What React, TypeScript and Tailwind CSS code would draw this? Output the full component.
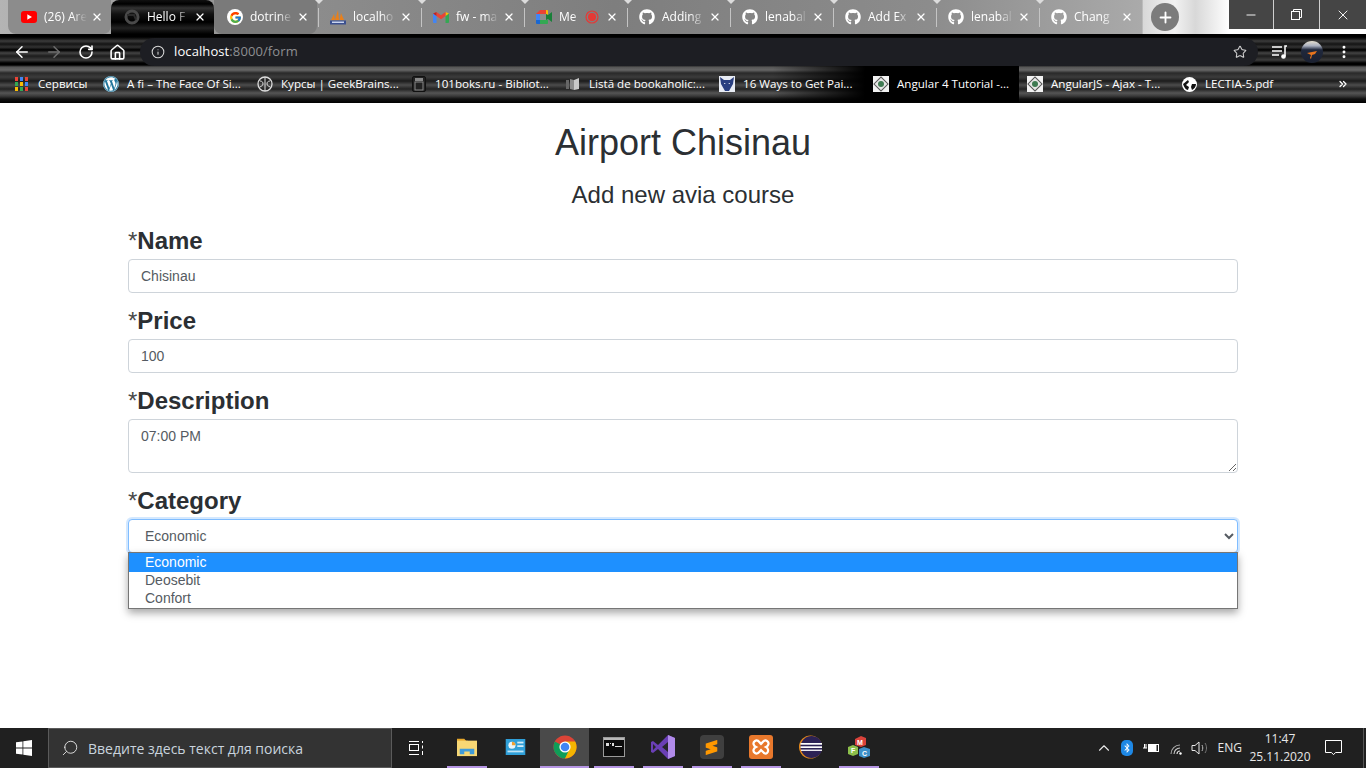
import React from "react";
import { ArrowLeft, ArrowRight, RotateCw, Home, Info, Star, MoreVertical, ChevronsRight, X, Plus, Minus, ChevronUp, Search } from "lucide-react";
import { FaGithub, FaWordpress, FaBluetoothB } from "react-icons/fa";
import { FcGoogle } from "react-icons/fc";
import { SiSublimetext } from "react-icons/si";

const Youtube = () => (
  <svg width="16" height="12" viewBox="0 0 16 12"><rect width="16" height="12" rx="3" fill="#f00" /><path d="M6.3 3.2 11 6 6.3 8.8z" fill="#fff" /></svg>
);
const LoadingDot = () => (
  <svg width="16" height="16" viewBox="0 0 16 16"><circle cx="8" cy="8" r="6" fill="none" stroke="#4a4a4a" strokeWidth="3" /><path d="M3 6h7l2 5" stroke="#2c2c2c" fill="none" strokeWidth="2" /></svg>
);
const GoogleIcon = () => (
  <span className="flex h-4 w-4 items-center justify-center rounded-full bg-white"><FcGoogle size={13} /></span>
);
const Pma = () => (
  <svg width="16" height="16" viewBox="0 0 16 16"><path d="M1 11 4 5l1 6zM5 11l3-10 1 10zM9.500 11 11 4l3 7z" fill="#e8801c" /><rect x="0" y="11.500" width="16" height="4" fill="#3a4f8f" /><rect x="2" y="12.500" width="12" height="1.500" fill="#c9d4ee" /></svg>
);
const Gmail = () => (
  <svg width="16" height="12" viewBox="0 0 16 12"><path d="M0 2v9a1 1 0 0 0 1 1h2.500V5z" fill="#4285f4" /><path d="M16 2v9a1 1 0 0 1-1 1h-2.500V5z" fill="#34a853" /><path d="M12.500 1 16 2.500 12.500 5z" fill="#fbbc04" /><path d="M3.500 5 8 8.300 12.500 5V1L8 4.300 3.500 1z" fill="#ea4335" /><path d="M0 2.500 3.500 1v4z" fill="#c5221f" /></svg>
);
const Meet = () => (
  <svg width="16" height="14" viewBox="0 0 16 14"><path d="M4 0h6v4H0z" fill="#ea4335" /><path d="M0 4h4v6H0z" fill="#4285f4" /><path d="M0 10h4v4H1a1 1 0 0 1-1-1z" fill="#1967d2" /><path d="M10 0h1a1 1 0 0 1 1 1v4l-2-1z" fill="#fbbc04" /><path d="M4 10h8v3a1 1 0 0 1-1 1H4z" fill="#34a853" /><path d="M10 4l2 1 4-3v10l-4-3-2 1z" fill="#188038" /><rect x="4" y="4" width="6" height="6" fill="#8d8d8d" /></svg>
);
const Record = () => (
  <svg width="14" height="14" viewBox="0 0 14 14"><circle cx="7" cy="7" r="6" fill="none" stroke="#e53935" strokeWidth="1.200" /><circle cx="7" cy="7" r="4" fill="#e53935" /></svg>
);
const Github = () => <FaGithub size={16} color="#fff" />;

const tabs: { icon: React.ReactNode; text: string; cls?: string; rec?: boolean }[] = [
  { icon: <Youtube />, text: "(26) Are", cls: "bg-[#8c8c8c] rounded-b-lg" },
  { icon: <LoadingDot />, text: "Hello F", cls: "active" },
  { icon: <GoogleIcon />, text: "dotrine", cls: "bg-[#7a7a7a] rounded-b-lg" },
  { icon: <Pma />, text: "localho", cls: "" },
  { icon: <Gmail />, text: "fw - ma", cls: "" },
  { icon: <Meet />, text: "Me", cls: "", rec: true },
  { icon: <Github />, text: "Adding", cls: "" },
  { icon: <Github />, text: "lenabal", cls: "" },
  { icon: <Github />, text: "Add Ex", cls: "" },
  { icon: <Github />, text: "lenabal", cls: "" },
  { icon: <Github />, text: "Chang", cls: "" },
];

const AppsIcon = () => (
  <svg width="13" height="14" viewBox="0 0 13 14">
    {[
      [0, 0, "#ea4335"], [5, 0, "#4285f4"], [10, 0, "#ea4335"],
      [0, 5, "#34a853"], [5, 5, "#fbbc04"], [10, 5, "#4285f4"],
      [0, 10, "#fbbc04"], [5, 10, "#34a853"], [10, 10, "#ea4335"],
    ].map(([x, y, c], i) => <rect key={i} x={x as number} y={y as number} width="3" height="4" fill={c as string} />)}
  </svg>
);
const Brain = () => (
  <svg width="16" height="16" viewBox="0 0 16 16"><circle cx="8" cy="8" r="7" fill="none" stroke="#ddd" strokeWidth="1.300" /><path d="M8 1v14M3 5c2 0 3 1 3 3s-2 2-3 3M13 5c-2 0-3 1-3 3s2 2 3 3" fill="none" stroke="#ddd" /></svg>
);
const BookDoc = () => (
  <svg width="14" height="16" viewBox="0 0 14 16"><rect x="0.500" y="0.500" width="13" height="15" rx="1.500" fill="#222" stroke="#111" /><rect x="3" y="2" width="8" height="3" fill="#888" /><rect x="3" y="6" width="8" height="8" fill="none" stroke="#888" /></svg>
);
const GreyBook = () => (
  <svg width="14" height="14" viewBox="0 0 14 14"><path d="M0 3h3v9H0z" fill="#666" /><path d="M4 2l4 1v10l-4-1z" fill="#8d8d8d" /><path d="M8 3l5-2v11l-5 1z" fill="#c9c9c9" /></svg>
);
const Wolf = () => (
  <svg width="16" height="16" viewBox="0 0 16 16"><rect width="16" height="16" fill="#e8ecf4" /><path d="M1 1l4 3h6l4-3-1 7-4 7H6L2 8z" fill="#2a3f80" /><path d="M5 7l2 1H5zM11 7 9 8h2z" fill="#fff" /></svg>
);
const Diamond = () => (
  <svg width="16" height="16" viewBox="0 0 16 16"><rect width="16" height="16" fill="#f2f2f2" /><rect x="3" y="3" width="10" height="10" transform="rotate(45 8 8)" fill="#e6e6e6" stroke="#555" /><circle cx="8" cy="8" r="3" fill="#3f7a52" /></svg>
);
const GlobeIcon = () => (
  <svg width="15" height="15" viewBox="0 0 15 15"><circle cx="7.500" cy="7.500" r="7.500" fill="#fff" /><path d="M1 7c2-1 3-3 5-4l1 2-3 3 3 2-1 3C4 13 2 10 1 7zM10 7h4c0 3-2 5-4 6l-1-3z" fill="#111" /></svg>
);

const bookmarks: { icon: React.ReactNode; text: string; cls?: string }[] = [
  { icon: <span className="flex h-4 w-4 items-center justify-center rounded-full bg-[#21759b] text-white"><FaWordpress size={16} color="#fff" /></span>, text: "A fi – The Face Of Si..." },
  { icon: <Brain />, text: "Курсы | GeekBrains..." },
  { icon: <BookDoc />, text: "101boks.ru - Bibliot..." },
  { icon: <GreyBook />, text: "Listă de bookaholic:..." },
  { icon: <Wolf />, text: "16 Ways to Get Pai...", cls: "bg-[linear-gradient(90deg,transparent_40%,#000_100%)]" },
  { icon: <Diamond />, text: "Angular 4 Tutorial -...", cls: "bg-black" },
  { icon: <Diamond />, text: "AngularJS - Ajax - T..." },
  { icon: <GlobeIcon />, text: "LECTIA-5.pdf" },
];

const Explorer = () => (
  <svg width="22" height="20" viewBox="0 0 24 22"><path d="M1 2h8l2 2h2v3H1z" fill="#e8a92c" /><rect x="1" y="4" width="22" height="17" fill="#f7d774" /><path d="M4 19v-6h16v6h-5v-3H9v3z" fill="#3f9bd9" /></svg>
);
const Control = () => (
  <svg width="21" height="16" viewBox="0 0 22 18"><rect width="22" height="18" fill="#2f9fd8" /><circle cx="7" cy="7" r="4" fill="#e8f5fb" /><path d="M7 7V3a4 4 0 0 1 4 4z" fill="#f0a030" /><rect x="13" y="3" width="7" height="2" fill="#d6eef9" /><rect x="13" y="7" width="7" height="2" fill="#d6eef9" /><rect x="2" y="13" width="18" height="2" fill="#bfe3f5" /></svg>
);
const Chrome = () => (
  <svg width="24" height="24" viewBox="0 0 24 24">
    <circle cx="12" cy="12" r="11.500" fill="#db4437" />
    <path d="M12 12 1.900 6.500A11.500 11.500 0 0 0 12 23.500l5.500-10z" fill="#0f9d58" />
    <path d="M12 6.500h10.200A11.500 11.500 0 0 1 12 23.500L17 13z" fill="#f4b400" />
    <circle cx="12" cy="12" r="5.600" fill="#fff" /><circle cx="12" cy="12" r="4.300" fill="#4285f4" />
  </svg>
);
const Cmd = () => (
  <svg width="22" height="20" viewBox="0 0 22 20"><rect x="0.500" y="0.500" width="21" height="19" fill="#0c0c0c" stroke="#9a9a9a" /><rect x="1" y="1" width="20" height="2" fill="#b8b8b8" /><path d="M3 6h3v3H3zM7 6h1v1H7zM9 6h2v3H9zM12 9h7v1h-7z" fill="#ddd" /></svg>
);
const VS = () => (
  <svg width="24" height="24" viewBox="0 0 24 24"><path d="M17 0l7 3v18l-7 3-10-10-5 4-2-1V7l2-1 5 4z" fill="#6a3fb5" /><path d="M17 0l7 3v18l-7 3z" fill="#b18bea" /><path d="M2 9v6l3-3zM17 7l-6 5 6 5z" fill="#26262a" /></svg>
);
const Sublime = () => (
  <span className="flex h-6 w-6 items-center justify-center rounded-sm bg-[#3f3f3f]"><SiSublimetext size={15} color="#ff9800" /></span>
);
const Xampp = () => (
  <svg width="24" height="24" viewBox="0 0 24 24"><rect width="24" height="24" rx="3" fill="#e8782c" /><path d="M6 6c3-2 4 1 6 3 2-2 3-5 6-3s1 5-1 6c2 1 3 4 1 6s-4-1-6-3c-2 2-3 5-6 3s-1-5 1-6C5 11 3 8 6 6z" fill="none" stroke="#fff" strokeWidth="2.200" /></svg>
);
const Eclipse = () => (
  <svg width="24" height="24" viewBox="0 0 24 24"><circle cx="12.500" cy="12" r="11.500" fill="#e88a1a" /><circle cx="13.500" cy="12" r="11" fill="#2c2255" /><rect x="2.500" y="8" width="22" height="1.700" fill="#fff" /><rect x="2.500" y="11.300" width="22" height="1.700" fill="#fff" /><rect x="3" y="14.600" width="21" height="1.300" fill="#fff" /></svg>
);
const Mgmt = () => (
  <svg width="24" height="24" viewBox="0 0 24 24">
    <path d="M8 4l6-3 5 2v7l-5 2-6-2z" fill="#d9433b" /><path d="M1 12l5-2 5 2v7l-5 2-5-2z" fill="#8cbf4b" /><path d="M12 14l5-2 6 2v7l-6 2-5-2z" fill="#3d8fc9" />
    <text x="10" y="10" fontSize="7" fontWeight="700" fill="#fff" fontFamily="Liberation Sans">M</text>
    <text x="4" y="18" fontSize="7" fontWeight="700" fill="#fff" fontFamily="Liberation Sans">F</text>
    <text x="15" y="21" fontSize="7" fontWeight="700" fill="#fff" fontFamily="Liberation Sans">C</text>
  </svg>
);

const taskIcons: { icon: React.ReactNode; line: boolean; active?: boolean }[] = [
  { icon: <Explorer />, line: true },
  { icon: <Control />, line: false },
  { icon: <Chrome />, line: true, active: true },
  { icon: <Cmd />, line: true },
  { icon: <VS />, line: true },
  { icon: <Sublime />, line: true },
  { icon: <Xampp />, line: true },
  { icon: <Eclipse />, line: false },
  { icon: <Mgmt />, line: true },
];

const fieldCls = "block w-full rounded-[4px] border border-[#ced4da] bg-white px-3 text-[14px] text-[#555b62] outline-none";
const labelCls = "mb-[4px] block h-[28px] text-[24px] leading-[28px] text-[#4a4a4a]";
const Req = ({ children }: { children: string }) => <>*<b className="font-bold text-[#2b2f33]">{children}</b></>;

export default function App() {
  return (
    <div className="flex h-[768px] w-[1366px] flex-col overflow-hidden bg-white [font-family:'Liberation_Sans',Arial,sans-serif]">
      <header className="flex h-[103px] shrink-0 flex-col [font-family:'Open_Sans','Noto_Sans',sans-serif]">
        <div className="flex h-[34px] shrink-0 bg-[linear-gradient(90deg,#b4b4b4_0,#8e8e8e_20%,#7e7e7e_45%,#8c8c8c_68%,#aaa_83.6%,#d8d8d8_83.7%,#f2f2f2_86%,#d8d8d8_87.5%,#fff_90%,#fff_100%)]">
          <div className="flex items-stretch pl-2">
            {tabs.map((t, i) => (
              <div key={i} className={`relative flex w-[103px] shrink-0 items-center pl-[13px] pr-[8px] ${t.cls === "active" ? "bg-[linear-gradient(180deg,#111_0,#000_4px,#333_8px,#111_14px,#000_22px,#222_28px,#000_34px)] rounded-t-lg" : t.cls}`}>
                <span className="flex w-[16px] shrink-0 items-center justify-center">{t.icon}</span>
                <span className={`ml-[7px] whitespace-nowrap text-[12px] text-white [mask-image:linear-gradient(to_right,black_65%,transparent)] ${t.rec ? "w-[22px]" : "w-[43px]"}`}>{t.text}</span>
                {t.rec && <span className="mx-[4px] flex items-center"><Record /></span>}
                <X size={12} strokeWidth={2.5} className="ml-auto text-white" />
                {i >= 2 && i < 10 && <span className="absolute -right-[2px] top-[8px] h-[19px] w-px bg-[#c4c4c4]" />}
                {i >= 2 && i < 10 && <span className="absolute -right-[6px] top-0 h-0 w-0 border-x-[4px] border-t-[4px] border-x-transparent border-t-[#dcdcdc]" />}
              </div>
            ))}
          </div>
          <div className="ml-[8px] mt-[3px] flex h-[28px] w-[28px] translate-x-[2px] items-center justify-center rounded-full bg-[#7b7b7b] text-white">
            <Plus size={17} strokeWidth={2.6} />
          </div>
          <div className="ml-auto flex h-[29px] w-[137px] bg-[#454545] text-white">
            <div className="flex w-[45px] items-center justify-center border-r border-[#cfcfcf]"><Minus size={14} strokeWidth={1.6} /></div>
            <div className="flex w-[46px] items-center justify-center border-r border-[#cfcfcf]"><svg width="11" height="11" viewBox="0 0 11 11" fill="none" stroke="#fff"><rect x="0.500" y="2.500" width="8" height="8" /><path d="M2.500 2.500v-2h8v8h-2" /></svg></div>
            <div className="flex flex-1 items-center justify-center"><X size={16} strokeWidth={1.4} /></div>
          </div>
        </div>

        <div className="flex flex-1 flex-col bg-[linear-gradient(180deg,#000_0,#000_3px,#1a1a1a_5px,#3c3c3c_7px,#141414_10px,#333_13px,#000_16px,#444_19px,#1c1c1c_22px,#3c3c3c_26px,#000_29px,#000_31px,#555_33px,#666_36px,#2a2a2a_39px,#3c3c3c_43px,#1c1c1c_47px,#4c4c4c_51px,#222_55px,#555_59px,#3a3a3a_62px,#111_65px,#000_69px)]">
          <div className="flex h-[32px] shrink-0 items-center pt-[4px]">
            <div className="flex w-[140px] shrink-0 items-center pl-[13px] text-white">
              <ArrowLeft size={18} strokeWidth={2} />
              <ArrowRight size={18} strokeWidth={2} className="ml-[14px] text-[#6e6e6e]" />
              <RotateCw size={16} strokeWidth={2.4} className="ml-[15px]" />
              <Home size={17} strokeWidth={2.2} className="ml-[15px]" />
            </div>
            <div className="flex h-[28px] w-[1118px] shrink-0 items-center rounded-full bg-[#1d1e23] pl-[11px] pr-[11px]">
              <Info size={14} strokeWidth={1.8} className="text-[#d8d8d8]" />
              <span className="ml-[9px] text-[13px] tracking-[0.1px] text-white">localhost<span className="text-[#8e8f92]">:8000/form</span></span>
              <Star size={14} strokeWidth={1.8} className="ml-auto text-[#cfcfcf]" />
            </div>
            <div className="flex flex-1 items-center pl-[14px] text-white">
              <svg width="16" height="14" viewBox="0 0 16 14" fill="none" stroke="#fff" strokeWidth="1.500"><path d="M0 2h10M0 6h10M0 10h7" /><path d="M15 1h-2v10" /><circle cx="11.500" cy="11.500" r="1.600" fill="#fff" /></svg>
              <span className="ml-[13px] h-[22px] w-[22px] overflow-hidden rounded-full bg-[linear-gradient(180deg,#e6e0d0_0,#aab0c0_22%,#20283c_40%,#1a2030_100%)]">
                <svg width="22" height="22" viewBox="0 0 22 22"><path d="M6 12l5-1 5-1-2 3-3 1-1 4-1-1 1-3z" fill="#e8741c" /></svg>
              </span>
              <MoreVertical size={16} strokeWidth={2.4} className="ml-[13px]" />
            </div>
          </div>

          <div className="flex h-[36px] shrink-0 items-center text-[11.6px] text-white">
            <div className="flex w-[95px] shrink-0 items-center pl-[15px]">
              <AppsIcon />
              <span className="ml-[10px]">Сервисы</span>
            </div>
            {bookmarks.map((b, i) => (
              <div key={i} className={`flex h-full w-[154px] shrink-0 items-center pl-[8px] ${b.cls ?? ""}`}>
                <span className="flex w-[16px] shrink-0 items-center justify-center">{b.icon}</span>
                <span className="ml-[8px] whitespace-nowrap">{b.text}</span>
              </div>
            ))}
            <ChevronsRight size={12} strokeWidth={2.5} className="ml-auto mr-[17px]" />
          </div>
        </div>
      </header>

      <main className="relative flex-1 px-[128px] pt-[17px]">
        <h1 className="h-[46px] text-center text-[36px] leading-[46px] text-[#2b2f33]">Airport Chisinau</h1>
        <h3 className="mt-[15px] h-[28px] text-center text-[24px] leading-[28px] text-[#2b2f33]">Add new avia course</h3>
        <form className="mt-[18px]">
          <div className="mb-[14px]">
            <label className={labelCls}><Req>Name</Req></label>
            <input readOnly value="Chisinau" className={`${fieldCls} h-[34px]`} />
          </div>
          <div className="mb-[14px]">
            <label className={labelCls}><Req>Price</Req></label>
            <input readOnly value="100" className={`${fieldCls} h-[34px]`} />
          </div>
          <div className="mb-[14px]">
            <label className={labelCls}><Req>Description</Req></label>
            <textarea readOnly value="07:00 PM" className={`${fieldCls} h-[54px] py-[6px] leading-[20px]`} />
          </div>
          <div className="relative">
            <label className={labelCls}><Req>Category</Req></label>
            <select defaultValue="Economic" className="block h-[34px] w-full rounded-[4px] border border-[#80bdff] bg-white px-3 text-[14px] text-[#555b62] shadow-[0_0_0_2px_rgba(128,189,255,0.35)] outline-none">
              <option>Economic</option>
              <option>Deosebit</option>
              <option>Confort</option>
            </select>
            <ul className="absolute left-0 top-[65px] w-full border border-[#767676] bg-white text-[14px] text-[#555b62] shadow-[0_4px_8px_rgba(0,0,0,0.35)]">
              <li className="h-[19px] bg-[#1e90ff] pl-4 leading-[18px] text-white">Economic</li>
              <li className="h-[18px] pl-4 leading-[16px]">Deosebit</li>
              <li className="h-[18px] pl-4 leading-[16px]">Confort</li>
            </ul>
          </div>
        </form>
      </main>

      <footer className="flex h-[40px] shrink-0 items-stretch bg-[#202020] text-white [font-family:'Open_Sans','Noto_Sans',sans-serif]">
        <div className="flex w-[48px] shrink-0 items-center justify-center">
          <svg width="16" height="16" viewBox="0 0 16 16" fill="#fff"><path d="M0 2.300 6.500 1.400v6.200H0zM7.300 1.300 16 0v7.600H7.300zM0 8.400h6.500v6.200L0 13.700zM7.300 8.400H16V16l-8.700-1.300z" /></svg>
        </div>
        <div className="flex w-[344px] shrink-0 items-center border border-[#5a5a5a] bg-[#333] pl-[12px]">
          <Search size={18} strokeWidth={1.2} className="-scale-x-100 text-[#e8e8e8]" />
          <span className="ml-[9px] text-[14px] text-[#c9d3de]">Введите здесь текст для поиска</span>
        </div>
        <div className="flex w-[48px] shrink-0 items-center justify-center">
          <svg width="16" height="16" viewBox="0 0 16 16" fill="none" stroke="#fff"><rect x="1.500" y="4.500" width="9" height="6" /><path d="M1 1.500h10M1 14.500h10M14.500 1v2M14.500 5.500v3M14.500 11v4" /></svg>
        </div>
        <div className="ml-[2px] flex">
          {taskIcons.map((t, i) => (
            <div key={i} className={`flex w-[49px] shrink-0 flex-col items-center ${t.active ? "bg-[#4a4a4a]" : ""}`}>
              <div className="flex flex-1 items-center justify-center">{t.icon}</div>
              <span className={`h-[2px] ${t.active ? "w-full" : "w-[40px]"} ${t.line ? "bg-[#b595e3]" : ""}`} />
            </div>
          ))}
        </div>
        <div className="ml-auto flex items-center pr-[2px] text-[#e8e8e8]">
          <ChevronUp size={18} strokeWidth={1.5} className="mr-[8px]" />
          <span className="mr-[10px] flex h-[16px] w-[12px] items-center justify-center rounded-[5px] bg-[#1e88e5]"><FaBluetoothB size={10} color="#fff" /></span>
          <svg className="mr-[10px]" width="16" height="12" viewBox="0 0 16 12" fill="none" stroke="#fff"><rect x="5.500" y="2.500" width="10" height="7" /><rect x="6" y="3" width="7" height="6" fill="#fff" /><path d="M0 6h4M1.500 2v4M3 2v4" /></svg>
          <svg className="mr-[8px]" width="14" height="14" viewBox="0 0 14 14" fill="none" strokeWidth="1.100">
            <path d="M11 10a3 3 0 0 0-3 3" stroke="#e0e0e0" />
            <path d="M11 7a6 6 0 0 0-6 6" stroke="#c8c8c8" />
            <path d="M11 4a9 9 0 0 0-9 9" stroke="#a8a8a8" />
            <circle cx="11.500" cy="12.500" r="1.200" fill="#fff" />
          </svg>
          <svg className="mr-[9px]" width="18" height="16" viewBox="0 0 18 16" fill="none" stroke="#e8e8e8" strokeWidth="1"><path d="M1 5.500h3L8 2v12l-4-3.500H1z" /><path d="M11 5c1 2 1 4 0 6" stroke="#bbb" /><path d="M14 3c2 3 2 7 0 10" stroke="#777" /></svg>
          <span className="mr-[5px] text-[12px]">ENG</span>
          <div className="flex w-[66px] flex-col items-center text-[12px] leading-[18px]">
            <span>11:47</span>
            <span>25.11.2020</span>
          </div>
          <div className="flex w-[49px] items-center justify-center pr-[9px]">
            <svg width="17" height="16" viewBox="0 0 17 16" fill="none" stroke="#fff"><path d="M.5.500h16v12h-6l-2 2.200-2-2.200h-6z" /></svg>
          </div>
          <span className="ml-[1px] h-full w-px bg-[#555]" />
        </div>
      </footer>
    </div>
  );
}
